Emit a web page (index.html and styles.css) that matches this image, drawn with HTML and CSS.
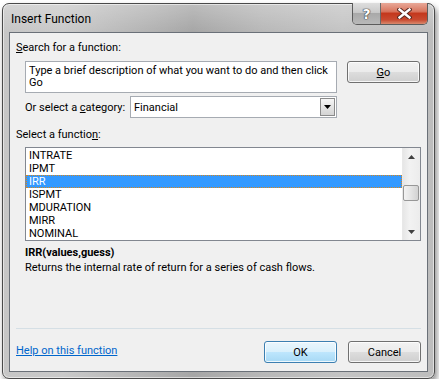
FILE: index.html
```html
<!DOCTYPE html>
<html lang="en">
<head>
  <meta charset="UTF-8">
  <title>Insert Function</title>
  <link rel="stylesheet" href="styles.css">
</head>
<body>

<div class="window">
  <div class="titlebar">
    <span class="title">Insert Function</span>
    <div class="caption-buttons">
      <span class="cap-btn help">?</span>
      <span class="cap-btn close">
        <svg width="15" height="11" viewBox="0 0 15 11">
          <path d="M2.5 1.5 L12.5 9.5 M12.5 1.5 L2.5 9.5" stroke="#5a2a22" stroke-width="4.4" stroke-linecap="square"/>
          <path d="M2.5 1.5 L12.5 9.5 M12.5 1.5 L2.5 9.5" stroke="#ffffff" stroke-width="2.4" stroke-linecap="square"/>
        </svg>
      </span>
    </div>
  </div>

  <div class="client">
    <div class="label"><u>S</u>earch for a function:</div>

    <div class="search-row">
      <div class="textbox">Type a brief description of what you want to do and then click Go</div>
      <button class="btn"><u>G</u>o</button>
    </div>

    <div class="category-row">
      <span>Or select a <u>c</u>ategory:</span>
      <div class="select">
        <span>Financial</span>
        <span class="drop">
          <svg width="7" height="4" viewBox="0 0 7 4"><path d="M0 0 H7 L3.5 4 Z" fill="#000"/></svg>
        </span>
      </div>
    </div>

    <div class="label list-label">Select a functio<u>n</u>:</div>

    <div class="listbox">
      <ul class="items">
        <li>INTRATE</li>
        <li>IPMT</li>
        <li class="selected">IRR</li>
        <li>ISPMT</li>
        <li>MDURATION</li>
        <li>MIRR</li>
        <li>NOMINAL</li>
      </ul>
      <div class="scrollbar">
        <span class="arrow">
          <svg width="7" height="4" viewBox="0 0 7 4"><path d="M0 4 H7 L3.5 0 Z" fill="#404040"/></svg>
        </span>
        <div class="track">
          <div class="thumb-space"></div>
          <div class="thumb"></div>
        </div>
        <span class="arrow">
          <svg width="7" height="4" viewBox="0 0 7 4"><path d="M0 0 H7 L3.5 4 Z" fill="#404040"/></svg>
        </span>
      </div>
    </div>

    <div class="desc">
      <div class="syntax">IRR(values,guess)</div>
      <div>Returns the internal rate of return for a series of cash flows.</div>
    </div>

    <div class="separator"></div>

    <div class="footer">
      <a href="#" class="help-link">Help on this function</a>
      <div class="actions">
        <button class="btn default">OK</button>
        <button class="btn">Cancel</button>
      </div>
    </div>
  </div>
</div>

</body>
</html>
```
FILE: styles.css
```css
body {
  margin: 0;
  background: #ffffff;
  font-family: Roboto, "Noto Sans", sans-serif;
  font-size: 11px;
  color: #000;
}
.window {
  position: relative;
  margin: 3px 0 0 2px;
  width: 419px;
  height: 340px;
  padding: 28px 6px 6px 6px;
  border: 1px solid #4a4a4a;
  border-radius: 7px;
  background:
    linear-gradient(180deg, rgba(255,255,255,0.25) 0, rgba(255,255,255,0) 28px),
    linear-gradient(90deg, #c6c6c6 0, #c9c9c9 60px, #b2b2b2 150px, #a6a6a6 190px, #b8b8b8 260px, #c4c4c4 340px, #bdbdbd 100%);
  box-shadow: 2px 4px 6px rgba(0, 0, 0, 0.45), inset 0 0 0 1px rgba(255, 255, 255, 0.55);
}
.titlebar {
  position: absolute;
  top: 0;
  left: 0;
  right: 0;
  height: 28px;
}
.title {
  position: absolute;
  left: 8px;
  top: 8px;
  font-size: 12px;
  line-height: 15px;
  color: #000;
}
.caption-buttons {
  position: absolute;
  top: -1px;
  right: 6px;
  display: flex;
  height: 21px;
  border: 1px solid #5c5c5c;
  border-top: none;
  border-radius: 0 0 5px 5px;
  overflow: hidden;
}
.cap-btn {
  display: flex;
  align-items: center;
  justify-content: center;
}
.help {
  width: 27px;
  border-right: 1px solid #6a6a6a;
  background: linear-gradient(180deg, #dedede 0, #c9c9c9 45%, #a9a9a9 50%, #b9b9b9 100%);
  color: #fff;
  font: bold 14px "DejaVu Sans", sans-serif;
  text-shadow: 0 0 1px #333, 0 0 1px #333, 0 0 1px #333;
}
.close {
  width: 46px;
  background: linear-gradient(180deg, #e8a898 0, #d8765f 40%, #c4381d 50%, #c84a30 80%, #d98a6e 100%);
}
.client {
  height: 338px;
  padding: 0 6px;
  border: 1px solid #6a7078;
  background: #f0f0f0;
}
.label {
  line-height: 15px;
  margin-top: 7px;
}
.list-label {
  margin-top: 9px;
}
.search-row {
  display: flex;
  align-items: flex-start;
  gap: 10px;
  margin: 6px 0 0 9px;
}
.textbox {
  width: 304px;
  height: 27px;
  padding: 3px 3px 0;
  border: 1px solid #a6abb2;
  background: #fff;
  line-height: 12px;
}
.btn {
  width: 73px;
  height: 22px;
  padding: 0;
  border: 1px solid #707070;
  border-radius: 3px;
  background: linear-gradient(180deg, #f2f2f2 0, #ebebeb 50%, #dddddd 51%, #cfcfcf 100%);
  box-shadow: inset 0 0 0 1px rgba(255, 255, 255, 0.8);
  font-family: Roboto, "Noto Sans", sans-serif;
  font-size: 11px;
  color: #000;
}
.btn.default {
  border-color: #3c7fb1;
  background: linear-gradient(180deg, #eaf6fd 0, #d9f0fc 50%, #bee6fd 51%, #a7d9f5 100%);
}
.category-row {
  display: flex;
  align-items: center;
  margin: 3px 0 0 9px;
}
.category-row > span {
  width: 105px;
  padding-top: 1px;
}
.select {
  display: flex;
  align-items: center;
  justify-content: space-between;
  box-sizing: border-box;
  width: 207px;
  height: 22px;
  padding-left: 3px;
  border: 1px solid #a6abb2;
  background: #fff;
}
.drop {
  display: flex;
  align-items: center;
  justify-content: center;
  width: 15px;
  height: 18px;
  margin-right: 1px;
  border: 1px solid #8a8a8a;
  box-sizing: border-box;
  background: linear-gradient(180deg, #f6f6f6 0, #e4e4e4 50%, #d4d4d4 100%);
}
.listbox {
  display: flex;
  width: 394px;
  height: 92px;
  margin: 5px 0 0 9px;
  border: 1px solid #828790;
  background: #fff;
}
.items {
  flex: 1;
  margin: 0;
  padding: 1px 0 0;
  list-style: none;
}
.items li {
  height: 13px;
  line-height: 13px;
  padding-left: 3px;
}
.items li.selected {
  background: #3399ff;
  color: #fff;
  outline: 1px dotted #d7861c;
  outline-offset: -1px;
}
.scrollbar {
  display: flex;
  flex-direction: column;
  width: 17px;
  background: linear-gradient(90deg, #e6e6e6 0, #f2f2f2 40%, #ececec 100%);
  border-left: 1px solid #e8e8e8;
}
.scrollbar .arrow {
  display: flex;
  align-items: center;
  justify-content: center;
  height: 17px;
}
.track {
  flex: 1;
}
.thumb-space {
  height: 20px;
}
.thumb {
  height: 14px;
  margin: 0 1px 0 0;
  border: 1px solid #979797;
  border-radius: 2px;
  background: linear-gradient(90deg, #f2f2f2 0, #e4e4e4 50%, #d2d2d2 100%);
}
.desc {
  box-sizing: border-box;
  height: 87px;
  margin-left: 9px;
  padding-top: 4px;
  line-height: 15px;
}
.syntax {
  font-weight: bold;
}
.separator {
  height: 1px;
  background: #d5dfe5;
}
.footer {
  display: flex;
  justify-content: space-between;
  align-items: center;
  margin-top: 12px;
}
.help-link {
  color: #0066cc;
  text-decoration: underline;
  margin-top: -3px;
}
.actions {
  display: flex;
  gap: 11px;
}
```
